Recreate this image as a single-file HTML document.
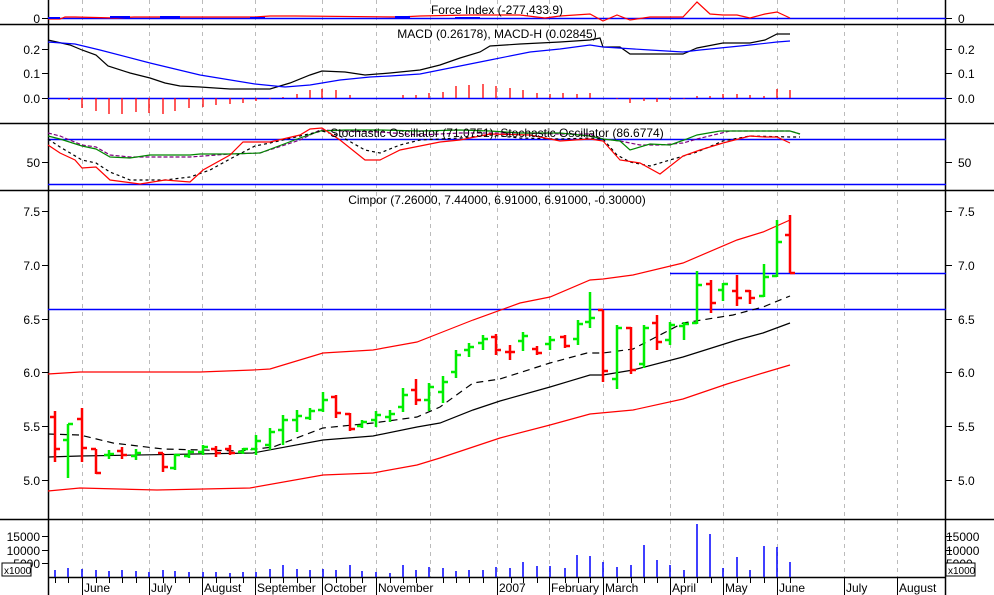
<!DOCTYPE html>
<html><head><meta charset="utf-8"><style>
html,body{margin:0;padding:0;background:#fff;}
svg{display:block;font-family:"Liberation Sans",sans-serif;}
</style></head><body>
<svg width="994" height="595" viewBox="0 0 994 595" xmlns="http://www.w3.org/2000/svg">
<rect width="994" height="595" fill="#fff"/>
<g stroke="#bbb" stroke-dasharray="4,4" stroke-width="1">
<path d="M82.5 0V577M149.5 0V577M202.5 0V577M255.5 0V577M322.5 0V577M376.5 0V577M430.5 0V577M497.5 0V577M549.5 0V577M603.5 0V577M670.5 0V577M723.5 0V577M777.5 0V577M844.5 0V577M897.5 0V577"/>
</g>
<g stroke="#000" stroke-width="1.5" fill="none">
<path d="M0 24.5H994M0 123.5H994M0 190.5H994M0 519.5H994M48 577.5H946"/>
<path d="M48.5 0V595M945.5 0V595"/>
</g>
<g stroke="#000" stroke-width="1">
<path d="M42 18.5H48M42 49.5H48M42 73.5H48M42 98.5H48M42 162.5H48M42 211.5H48M42 265.5H48M42 319.5H48M42 372.5H48M42 426.5H48M42 480.5H48M42 536.5H48M42 550.5H48M42 563.5H48"/>
<path d="M946 18.5H952M946 49.5H952M946 73.5H952M946 98.5H952M946 162.5H952M946 211.5H952M946 265.5H952M946 319.5H952M946 372.5H952M946 426.5H952M946 480.5H952M946 536.5H952M946 550.5H952M946 563.5H952"/>
<path d="M82.5 577V595M149.5 577V595M202.5 577V595M255.5 577V595M322.5 577V595M376.5 577V595M497.5 577V595M549.5 577V595M603.5 577V595M670.5 577V595M723.5 577V595M777.5 577V595M844.5 577V595M897.5 577V595"/>
<path d="M55.5 577V583M68.5 577V583M96.5 577V583M109.5 577V583M122.5 577V583M136.5 577V583M163.5 577V583M175.5 577V583M189.5 577V583M216.5 577V583M230.5 577V583M243.5 577V583M270.5 577V583M283.5 577V583M297.5 577V583M310.5 577V583M336.5 577V583M350.5 577V583M362.5 577V583M390.5 577V583M403.5 577V583M416.5 577V583M443.5 577V583M456.5 577V583M469.5 577V583M483.5 577V583M511.5 577V583M523.5 577V583M537.5 577V583M565.5 577V583M578.5 577V583M590.5 577V583M617.5 577V583M631.5 577V583M644.5 577V583M657.5 577V583M684.5 577V583M697.5 577V583M711.5 577V583M737.5 577V583M750.5 577V583M764.5 577V583M790.5 577V583"/>
</g>
<g font-size="12" fill="#000">
<text x="40" y="23" text-anchor="end">0</text>
<text x="40" y="54" text-anchor="end">0.2</text>
<text x="40" y="78" text-anchor="end">0.1</text>
<text x="40" y="103" text-anchor="end">0.0</text>
<text x="40" y="167" text-anchor="end">50</text>
<text x="40" y="216" text-anchor="end">7.5</text>
<text x="40" y="270" text-anchor="end">7.0</text>
<text x="40" y="324" text-anchor="end">6.5</text>
<text x="40" y="377" text-anchor="end">6.0</text>
<text x="40" y="431" text-anchor="end">5.5</text>
<text x="40" y="485" text-anchor="end">5.0</text>
<text x="40" y="541" text-anchor="end">15000</text>
<text x="40" y="555" text-anchor="end">10000</text>
<text x="40" y="568" text-anchor="end">5000</text>
<text x="958" y="23">0</text>
<text x="958" y="54">0.2</text>
<text x="958" y="78">0.1</text>
<text x="958" y="103">0.0</text>
<text x="958" y="167">50</text>
<text x="958" y="216">7.5</text>
<text x="958" y="270">7.0</text>
<text x="958" y="324">6.5</text>
<text x="958" y="377">6.0</text>
<text x="958" y="431">5.5</text>
<text x="958" y="485">5.0</text>
<text x="946" y="541">15000</text>
<text x="946" y="555">10000</text>
<text x="946" y="568">5000</text>
<text x="84" y="592">June</text><text x="151" y="592">July</text><text x="204" y="592">August</text>
<text x="257" y="592">September</text><text x="324" y="592">October</text><text x="378" y="592">November</text>
<text x="499" y="592">2007</text><text x="551" y="592">February</text><text x="605" y="592">March</text>
<text x="672" y="592">April</text><text x="725" y="592">May</text><text x="779" y="592">June</text>
<text x="846" y="592">July</text><text x="899" y="592">August</text>
</g>
<rect x="2" y="563" width="29" height="13" fill="#fff" stroke="#000"/>
<text x="4" y="574" font-size="10">x1000</text>
<rect x="946" y="563" width="29" height="13" fill="#fff" stroke="#000"/>
<text x="948" y="574" font-size="10">x1000</text>
<path d="M48 18.5H946" stroke="#00f" stroke-width="1.5"/>
<polyline fill="none" stroke="#f00" stroke-width="1.2" points="48,19 60,19 65,17 75,17 116,18 134,17 163,17 255,17 270,16 295,16 400,17 420,16 470,15 500,15 520,15 545,18 560,16 590,14 603,21 617,15 630,20 650,17 683,17 697,2 710,14 723,15 737,15 750,18 765,14 777,12 790,18"/>
<path d="M48 18H60M110 17H130M160 17H180M250 18H265M395 17H410M455 18H480" stroke="#00f" stroke-width="2"/>
<text x="497" y="14" font-size="12" text-anchor="middle">Force Index (-277,433.9)</text>
<path d="M48 98.5H946" stroke="#00f" stroke-width="1.5"/>
<polyline fill="none" stroke="#000" stroke-width="1.2" points="48,40 70,45 82,50 96,55 108,66 130,73 150,78 165,83 180,86 200,87 230,89 270,89 290,83 310,75 322,71 345,72 365,75 390,73 420,70 440,65 460,58 480,52 490,46 520,44 560,42 590,40 600,38 603,47 620,47 630,54 660,54 683,54 697,48 723,43 750,43 765,40 777,34 790,34"/>
<polyline fill="none" stroke="#00f" stroke-width="1.2" points="48,42 75,44 100,50 150,63 200,75 255,84 285,87 310,85 340,80 370,77 390,76 420,74 450,68 490,60 530,52 560,49 590,45 603,47 650,50 683,52 700,50 750,45 777,42 790,41"/>
<g stroke="#f00" stroke-width="1.3">
<path d="M69 98V100M82 98V108M96 98V111M109 98V114M122 98V114M136 98V112M149 98V113M163 98V114M175 98V111M189 98V108M203 98V107M216 98V105M230 98V104M243 98V103M256 98V101M270 98V99M283 98V97M297 98V94M310 98V90M322 98V89M336 98V90M350 98V95M403 98V95M416 98V95M429 98V93M443 98V92M456 98V86M469 98V85M483 98V84M496 98V86M510 98V88M523 98V90M537 98V93M550 98V94M563 98V93M577 98V94M590 98V93M617 98V99M630 98V103M644 98V101M657 98V102M670 98V100M684 98V99M697 98V96M710 98V96M723 98V94M737 98V94M750 98V95M764 98V96M777 98V89M790 98V90"/>
</g>
<text x="497" y="38" font-size="12" text-anchor="middle">MACD (0.26178), MACD-H (0.02845)</text>
<path d="M48 139.5H946M48 184.5H946" stroke="#00f" stroke-width="1.5"/>
<polyline fill="none" stroke="#800080" stroke-width="1.2" stroke-dasharray="4,2" points="48,133 60,136 82,145 96,147 110,155 130,157 165,157 190,157 230,154 260,153 300,140 320,130 345,131 380,132 420,135 460,133 520,133 560,134 590,134 603,139 620,141 640,145 660,145 683,143 697,139 730,131 750,131 790,131 800,134"/>
<polyline fill="none" stroke="#080" stroke-width="1.2" points="48,136 60,139 82,146 96,149 110,157 130,158 150,155 190,155 200,154 230,154 260,153 300,138 320,131 345,130 380,130 420,131 460,130 490,131 520,133 560,133 590,136 603,139 620,141 630,150 650,144 670,145 684,140 697,135 720,131 760,131 790,131 800,134"/>
<polyline fill="none" stroke="#000" stroke-width="1.2" stroke-dasharray="3,3" points="48,139 60,147 82,160 96,163 110,172 130,180 165,180 190,177 210,170 230,159 255,146 270,143 300,136 322,131 340,136 365,150 380,153 400,145 420,140 460,138 490,135 520,138 560,139 590,138 603,139 617,155 630,162 650,166 670,160 697,152 723,141 750,136 790,137 800,137"/>
<polyline fill="none" stroke="#f00" stroke-width="1.2" points="48,145 60,153 75,160 82,168 96,167 110,180 140,184 165,180 190,182 203,170 230,155 243,142 270,142 300,135 310,129 322,128 340,140 365,160 380,160 400,150 420,146 440,142 460,140 490,134 530,135 560,141 590,139 603,141 620,160 640,163 660,174 683,156 700,150 723,143 750,136 765,137 777,137 790,143"/>
<text x="497" y="137" font-size="12" text-anchor="middle">Stochastic Oscillator (71.0751), Stochastic Oscillator (86.6774)</text>
<text x="497" y="204" font-size="12" text-anchor="middle">Cimpor (7.26000, 7.44000, 6.91000, 6.91000, -0.30000)</text>
<path d="M48 309.5H946M670 273.5H946" stroke="#00f" stroke-width="1.5"/>
<polyline fill="none" stroke="#f00" stroke-width="1.2" points="48,374 80,372 103,372 200,372 253,370 270,369 323,353 373,350 417,342 440,333 473,320 520,303 550,297 590,280 603,279 633,275 683,263 737,240 763,232 790,220"/>
<polyline fill="none" stroke="#f00" stroke-width="1.2" points="48,491 80,488 157,490 250,488 323,475 373,473 417,465 440,458 500,438 550,425 590,414 633,410 683,399 727,384 763,373 790,365"/>
<polyline fill="none" stroke="#000" stroke-width="1.2" points="48,457 80,456 253,453 323,440 373,436 417,427 440,423 473,410 500,401 550,387 590,375 603,375 633,370 683,357 737,340 763,333 790,323"/>
<polyline fill="none" stroke="#000" stroke-width="1.2" stroke-dasharray="7,5" points="48,434 80,435 113,443 163,449 240,451 273,447 323,428 373,423 417,417 440,407 473,383 500,379 550,363 587,353 603,353 633,349 683,323 733,315 763,307 790,296"/>
<g stroke-width="2.5" fill="none">
<g stroke="#f00">
<path d="M55 411V462M50 417H55M55 449H60"/>
<path d="M82 408V462M77 419H82M82 448H87"/>
<path d="M96 449V474M91 449H96M96 473H101"/>
<path d="M122 447V459M117 451H122M122 455H127"/>
<path d="M163 453V472M158 453H163M163 467H168"/>
<path d="M216 446V457M211 449H216M216 453H221"/>
<path d="M230 445V455M225 449H230M230 453H235"/>
<path d="M336 395V418M331 397H336M336 413H341"/>
<path d="M350 413V431M345 414H350M350 429H355"/>
<path d="M416 379V405M411 390H416M416 400H421"/>
<path d="M496 334V355M491 337H496M496 350H501"/>
<path d="M510 345V360M505 352H515"/>
<path d="M537 346V355M532 349H537M537 353H542"/>
<path d="M565 335V348M560 337H565M565 346H570"/>
<path d="M603 310V382M598 310H603M603 371H608"/>
<path d="M631 327V374M626 328H631M631 370H636"/>
<path d="M657 315V350M652 323H657M657 342H662"/>
<path d="M711 280V313M706 284H711M711 303H716"/>
<path d="M737 275V306M732 291H737M737 298H742"/>
<path d="M750 290V304M745 291H750M750 298H755"/>
<path d="M790 215V273M785 235H790M790 273H795"/>
</g>
<g stroke="#0e0">
<path d="M68 424V478M63 440H68M68 424H73"/>
<path d="M109 450V459M104 455H109M109 454H114"/>
<path d="M136 449V460M131 456H136M136 453H141"/>
<path d="M175 454V470M170 468H175M175 455H180"/>
<path d="M189 450V458M184 456H189M189 452H194"/>
<path d="M203 445V455M198 452H203M203 447H208"/>
<path d="M243 448V454M238 452H243M243 449H248"/>
<path d="M256 435V455M251 449H256M256 441H261"/>
<path d="M270 428V450M265 445H270M270 432H275"/>
<path d="M283 415V445M278 430H283M283 420H288"/>
<path d="M297 410V432M292 420H297M297 416H302"/>
<path d="M310 408V420M305 418H310M310 411H315"/>
<path d="M323 392V412M318 410H323M323 400H328"/>
<path d="M362 420V428M357 426H362M362 422H367"/>
<path d="M376 411V427M371 420H376M376 415H381"/>
<path d="M390 410V422M385 417H390M390 414H395"/>
<path d="M403 388V412M398 407H403M403 395H408"/>
<path d="M429 383V411M424 400H429M429 387H434"/>
<path d="M443 376V403M438 392H443M443 382H448"/>
<path d="M456 350V378M451 372H456M456 355H461"/>
<path d="M469 343V357M464 350H469M469 347H474"/>
<path d="M483 335V350M478 343H483M483 339H488"/>
<path d="M523 332V351M518 341H523M523 336H528"/>
<path d="M550 336V350M545 344H550M550 340H555"/>
<path d="M578 320V345M573 339H578M578 324H583"/>
<path d="M590 292V328M585 322H590M590 318H595"/>
<path d="M617 325V389M612 379H617M617 328H622"/>
<path d="M644 325V368M639 364H644M644 328H649"/>
<path d="M670 322V345M665 340H670M670 325H675"/>
<path d="M684 322V340M679 326H684M684 324H689"/>
<path d="M697 271V324M692 323H697M697 285H702"/>
<path d="M723 283V301M718 290H723M723 284H728"/>
<path d="M764 264V297M759 296H764M764 277H769"/>
<path d="M777 220V277M772 276H777M777 242H782"/>
</g>
</g>
<g stroke="#00f" stroke-width="1.5">
<path d="M55 577V570M68 577V568M82 577V569M96 577V570M109 577V571M122 577V570M136 577V571M149 577V572M163 577V570M175 577V571M189 577V572M203 577V572M216 577V572M230 577V573M243 577V572M256 577V572M270 577V569M283 577V565M297 577V569M310 577V570M323 577V569M336 577V570M350 577V565M362 577V571M376 577V572M390 577V573M403 577V565M416 577V570M429 577V567M443 577V568M456 577V571M469 577V570M483 577V570M496 577V567M510 577V568M523 577V562M537 577V566M550 577V566M565 577V568M577 577V555M590 577V556M603 577V562M617 577V567M631 577V565M644 577V545M657 577V560M670 577V565M684 577V570M697 577V524M710 577V534M723 577V568M737 577V557M750 577V570M764 577V546M777 577V547M790 577V562"/>
</g>
</svg>
</body></html>
